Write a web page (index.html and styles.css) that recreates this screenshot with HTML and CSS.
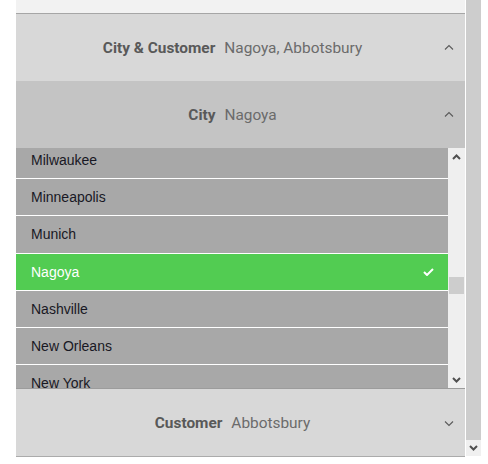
FILE: index.html
```html
<!DOCTYPE html>
<html>
<head>
<meta charset="utf-8">
<link rel="stylesheet" href="styles.css">
</head>
<body>
<div class="frame">
  <div class="main">
    <div class="top"></div>
    <div class="hdr hdr-light">
      <div class="title"><span class="lbl">City &amp; Customer</span><span class="val">Nagoya, Abbotsbury</span></div>
      <svg class="chev" width="10" height="6" viewBox="0 0 10 6"><path d="M1 5.5 L5 1.5 L9 5.5" fill="none" stroke="#5a5a5a" stroke-width="1.1"/></svg>
    </div>
    <div class="hdr hdr-mid">
      <div class="title"><span class="lbl">City</span><span class="val">Nagoya</span></div>
      <svg class="chev" width="10" height="6" viewBox="0 0 10 6"><path d="M1 5.5 L5 1.5 L9 5.5" fill="none" stroke="#5a5a5a" stroke-width="1.1"/></svg>
    </div>
    <div class="list">
      <div class="items">
        <div class="items-inner">
          <div class="row">Milwaukee</div>
          <div class="row">Minneapolis</div>
          <div class="row">Munich</div>
          <div class="row sel"><span>Nagoya</span>
            <svg width="11" height="8" viewBox="0 0 11 8"><path d="M1 4 L4 7 L10 1" fill="none" stroke="#fff" stroke-width="2"/></svg>
          </div>
          <div class="row">Nashville</div>
          <div class="row">New Orleans</div>
          <div class="row">New York</div>
        </div>
      </div>
      <div class="vscroll">
        <div class="arrow"><svg width="9" height="6" viewBox="0 0 9 6"><path d="M1 5 L4.5 1.5 L8 5" fill="none" stroke="#505050" stroke-width="2"/></svg></div>
        <div class="track"><div class="thumb"></div></div>
        <div class="arrow"><svg width="9" height="6" viewBox="0 0 9 6"><path d="M1 1 L4.5 4.5 L8 1" fill="none" stroke="#505050" stroke-width="2"/></svg></div>
      </div>
    </div>
    <div class="hdr hdr-light hdr-foot">
      <div class="title"><span class="lbl">Customer</span><span class="val">Abbotsbury</span></div>
      <svg class="chev" width="10" height="6" viewBox="0 0 10 6"><path d="M1 0.5 L5 4.5 L9 0.5" fill="none" stroke="#5a5a5a" stroke-width="1.1"/></svg>
    </div>
  </div>
  <div class="outer">
    <div class="outer-thumb"></div>
    <div class="outer-btn"><svg width="9" height="6" viewBox="0 0 9 6"><path d="M1 1 L4.5 4.5 L8 1" fill="none" stroke="#505050" stroke-width="2"/></svg></div>
  </div>
</div>
</body>
</html>
```
FILE: styles.css
```css
html, body {
  margin: 0;
  padding: 0;
  background: #ffffff;
}
.frame {
  display: flex;
  padding-left: 16px;
  align-items: flex-start;
}
.main {
  width: 449px;
  display: flex;
  flex-direction: column;
  border-bottom: 1px solid #ababab;
}
.top {
  height: 13px;
  background: #f2f2f2;
  border-bottom: 1px solid #a6a6a6;
}
.hdr {
  position: relative;
  height: 67px;
  display: flex;
  align-items: center;
  justify-content: center;
  padding-right: 16px;
  font-family: Roboto, "Liberation Sans", sans-serif;
  font-size: 15.4px;
}
.hdr-light { background: #d8d8d8; }
.hdr-mid { background: #c4c4c4; }
.hdr-foot { border-top: 1px solid #9c9c9c; }
.title { display: flex; align-items: baseline; gap: 9px; white-space: nowrap; }
.lbl { font-weight: bold; color: #595959; }
.val { color: #6b6b6b; }
.chev {
  position: absolute;
  right: 11px;
  top: 30px;
}
.hdr-foot .chev { top: 32px; }
.list {
  height: 240px;
  display: flex;
  background: #a8a8a8;
}
.items {
  flex: 1;
  overflow: hidden;
}
.items-inner {
  margin-top: -6px;
}
.row {
  height: 36.2px;
  border-bottom: 1px solid #ffffff;
  background: #a8a8a8;
  display: flex;
  align-items: center;
  justify-content: space-between;
  padding: 0 14px 0 15px;
  font-family: "Liberation Sans", Arial, sans-serif;
  font-size: 14px;
  color: #181824;
}
.row.sel {
  background: #52cc52;
  color: #ffffff;
}
.vscroll {
  width: 17px;
  background: #efefef;
  display: flex;
  flex-direction: column;
}
.arrow {
  height: 17px;
  display: flex;
  align-items: center;
  justify-content: center;
}
.track {
  flex: 1;
  position: relative;
}
.thumb {
  position: absolute;
  left: 1px;
  right: 1px;
  top: 112px;
  height: 17px;
  background: #cdcdcd;
}
.outer {
  width: 15px;
  margin-left: 1px;
  height: 456px;
  display: flex;
  flex-direction: column;
}
.outer-thumb {
  height: 440px;
  background: #cdcdcd;
}
.outer-btn {
  height: 16px;
  background: #f0f0f0;
  display: flex;
  align-items: center;
  justify-content: center;
}
```
